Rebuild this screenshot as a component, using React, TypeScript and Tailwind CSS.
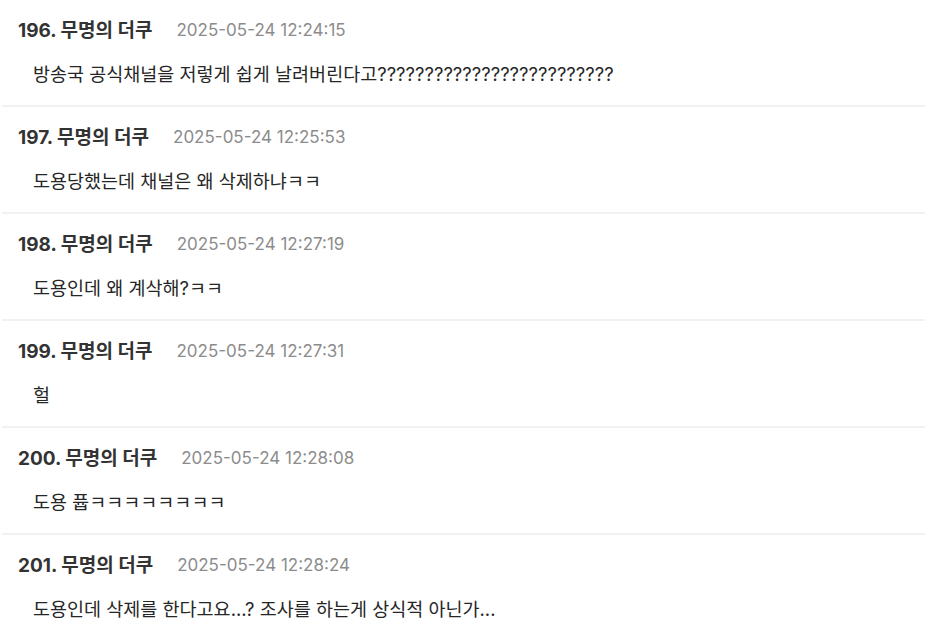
const POSTS = [
  { no: 196, time: '2025-05-24 12:24:15', body: '방송국 공식채널을 저렇게 쉽게 날려버린다고?????????????????????????' },
  { no: 197, time: '2025-05-24 12:25:53', body: '도용당했는데 채널은 왜 삭제하냐ㅋㅋ' },
  { no: 198, time: '2025-05-24 12:27:19', body: '도용인데 왜 계삭해?ㅋㅋ' },
  { no: 199, time: '2025-05-24 12:27:31', body: '헐' },
  { no: 200, time: '2025-05-24 12:28:08', body: '도용 퓹ㅋㅋㅋㅋㅋㅋㅋㅋ' },
  { no: 201, time: '2025-05-24 12:28:24', body: '도용인데 삭제를 한다고요...? 조사를 하는게 상식적 아닌가...' },
]

export default function App() {
  return (
    <div
      className="w-[925px] h-[638px] overflow-hidden bg-white"
      style={{ fontFamily: "Inter, 'Noto Sans CJK KR', sans-serif" }}
    >
      {POSTS.map((p) => (
        <div key={p.no} className="ml-[2px] h-[107px] border-b-2 border-[#f1f1f1] flex flex-col">
          <div className="flex items-center gap-[24px] pl-[16px] pt-[19px] h-[43px]">
            <span className="text-[19px] font-bold text-[#333]">
              {p.no}. 무명의 더쿠
            </span>
            <span className="text-[17px] text-[#8c8c8c]">{p.time}</span>
          </div>
          <p className="pl-[31px] mt-[19px] text-[18.5px] leading-[24px] text-[#262626]">{p.body}</p>
        </div>
      ))}
    </div>
  )
}
